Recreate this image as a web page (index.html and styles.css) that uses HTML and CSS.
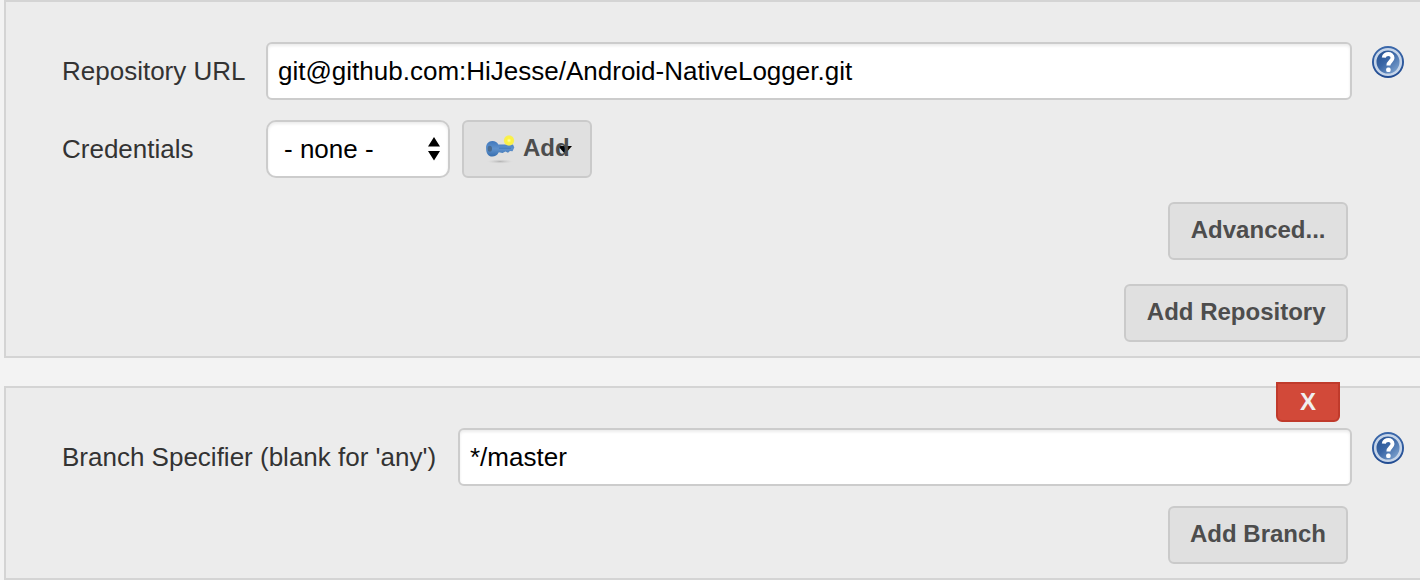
FILE: index.html
```html
<!DOCTYPE html>
<html lang="en">
<head>
<meta charset="utf-8">
<title>Git configuration</title>
<link rel="stylesheet" href="styles.css">
</head>
<body>
<svg class="defs" aria-hidden="true">
  <defs>
    <linearGradient id="help-fill" x1="0" y1="0" x2="1" y2="1">
      <stop offset="0" stop-color="#214b8b"/>
      <stop offset="0.45" stop-color="#3b67a6"/>
      <stop offset="1" stop-color="#91b4db"/>
    </linearGradient>
    <linearGradient id="help-rim" x1="0" y1="0" x2="0" y2="1">
      <stop offset="0" stop-color="#3b68aa"/>
      <stop offset="1" stop-color="#214b91"/>
    </linearGradient>
    <symbol id="help" viewBox="0 0 32 32">
      <circle cx="16" cy="16" r="16" fill="url(#help-rim)"/>
      <circle cx="16" cy="16" r="12.8" fill="url(#help-fill)" stroke="#c6d5e9" stroke-width="2.6"/>
      <path d="M11.8 11.6C12.2 7 20.6 6.6 20.5 12C20.4 15.3 16.4 15.2 16.4 19.6" fill="none" stroke="#fff" stroke-width="4"/>
      <rect x="14.2" y="21.6" width="4.4" height="4.4" rx="1.6" fill="#fff"/>
    </symbol>
  </defs>
</svg>

<section class="panel">
  <div class="row">
    <label class="label" for="url">Repository URL</label>
    <input class="input" id="url" type="text" value="git@github.com:HiJesse/Android-NativeLogger.git" spellcheck="false">
    <svg class="help"><use href="#help"/></svg>
  </div>
  <div class="row credentials">
    <span class="label">Credentials</span>
    <div class="select">
      <span>- none -</span>
      <svg class="arrows" viewBox="0 0 12 24"><path d="M0 9.5L6 0L12 9.5ZM0 14L6 23.5L12 14Z"/></svg>
    </div>
    <button class="button add" type="button">
      <svg class="key" viewBox="0 0 30 30">
        <defs>
          <radialGradient id="glow"><stop offset="0" stop-color="#fffdb0"/><stop offset=".4" stop-color="#fdf33c"/><stop offset=".8" stop-color="#f8ef52"/><stop offset="1" stop-color="#f8ef52" stop-opacity="0"/></radialGradient>
          <radialGradient id="shade"><stop offset="0" stop-color="#b4b4b4"/><stop offset="1" stop-color="#d0d0d0" stop-opacity="0"/></radialGradient>
          <linearGradient id="metal" x1="0" y1="0" x2="0" y2="1"><stop offset="0" stop-color="#3f78bd"/><stop offset=".5" stop-color="#5f92cd"/><stop offset="1" stop-color="#376eae"/></linearGradient>
        </defs>
        <ellipse cx="15" cy="26.5" rx="13" ry="2.2" fill="url(#shade)"/>
        <path d="M1 13C1 9 3.5 6 7.3 6C10.3 6 12.3 7.3 13.3 9.5H28L29.3 12.5L27.5 16.3L25 16L23 17.8L20.5 16.6L17.5 18L13.8 17.3C12.4 20.2 10 21.6 7.3 21.6C3.2 21.6 1 18 1 13Z" fill="url(#metal)"/>
        <ellipse cx="4.8" cy="13.7" rx="2.2" ry="3" fill="#4a6c91"/>
        <path d="M14 13.2H26" stroke="#4379b9"/>
        <circle cx="24" cy="5.5" r="5.7" fill="url(#glow)"/>
      </svg>
      <svg class="caret" viewBox="0 0 14 8"><path d="M0 0H14L7 8Z"/></svg>
      <span class="add-text">Add</span>
    </button>
  </div>
  <div class="actions"><button class="button" type="button">Advanced...</button></div>
  <div class="actions"><button class="button" type="button">Add Repository</button></div>
</section>

<section class="panel branches">
  <button class="delete" type="button">X</button>
  <div class="row">
    <label class="label label-wide" for="branch">Branch Specifier (blank for 'any')</label>
    <input class="input" id="branch" type="text" value="*/master" spellcheck="false">
    <svg class="help"><use href="#help"/></svg>
  </div>
  <div class="actions"><button class="button button-branch" type="button">Add Branch</button></div>
</section>
</body>
</html>
```

FILE: styles.css
```css
* { box-sizing: border-box; }

body {
  margin: 0;
  padding-left: 4px;
  height: 580px;
  overflow: hidden;
  background: #f3f3f3;
  color: #333;
  font: 26px/30px "Liberation Sans", Arial, sans-serif;
}

.defs { position: absolute; width: 0; height: 0; }

.panel {
  display: flex;
  flex-direction: column;
  gap: 24px;
  height: 358px;
  padding: 40px 0 14px 56px;
  border: 2px solid #d4d4d4;
  border-right: 0;
  background: #ececec;
}

.row { display: flex; height: 58px; align-items: center; }
.credentials { margin-top: -4px; }

.label { flex: none; width: 204px; }
.label-wide { width: 396px; }

.input,
.select {
  height: 58px;
  border: 2px solid #ccc;
  border-radius: 6px;
  background: #fff;
  box-shadow: inset 0 2px 3px rgba(0, 0, 0, .08);
  color: #000;
  font: inherit;
}

.input { flex: 1; min-width: 0; padding: 0 10px; outline: 0; }

.select {
  display: flex;
  align-items: center;
  justify-content: space-between;
  width: 184px;
  padding: 0 8px 0 16px;
  border-radius: 10px;
}

.arrows { width: 12px; height: 24px; }

.help { flex: none; align-self: flex-start; width: 32px; height: 32px; margin: 4px 16px 0 20px; }

.button {
  height: 58px;
  padding: 0 20.5px 2px;
  border: 2px solid #cacaca;
  border-radius: 6px;
  background: #e0e0e0;
  color: #4d4d4d;
  font: bold 24px/28px "Liberation Sans", Arial, sans-serif;
  white-space: nowrap;
}

.button-branch { width: 180px; padding-inline: 0; }

.add {
  position: relative;
  display: flex;
  align-items: center;
  gap: 8px;
  width: 130px;
  margin-left: 12px;
  padding-left: 21px;
}

.key { flex: none; width: 30px; height: 30px; margin-top: 4px; }
.caret { position: absolute; left: 94px; top: 24px; width: 14px; height: 8px; }
.add-text { position: relative; }

.actions { display: flex; justify-content: flex-end; padding-right: 72px; }

.branches {
  position: relative;
  gap: 20px;
  height: 194px;
  margin-top: 28px;
}

.delete {
  position: absolute;
  top: -6px;
  right: 80px;
  width: 64px;
  height: 40px;
  padding: 0;
  border: 2px solid #c03a2b;
  border-radius: 0 0 6px 6px;
  background: #d24939;
  color: #f0f0f0;
  font: bold 24px/28px "Liberation Sans", Arial, sans-serif;
}
```
